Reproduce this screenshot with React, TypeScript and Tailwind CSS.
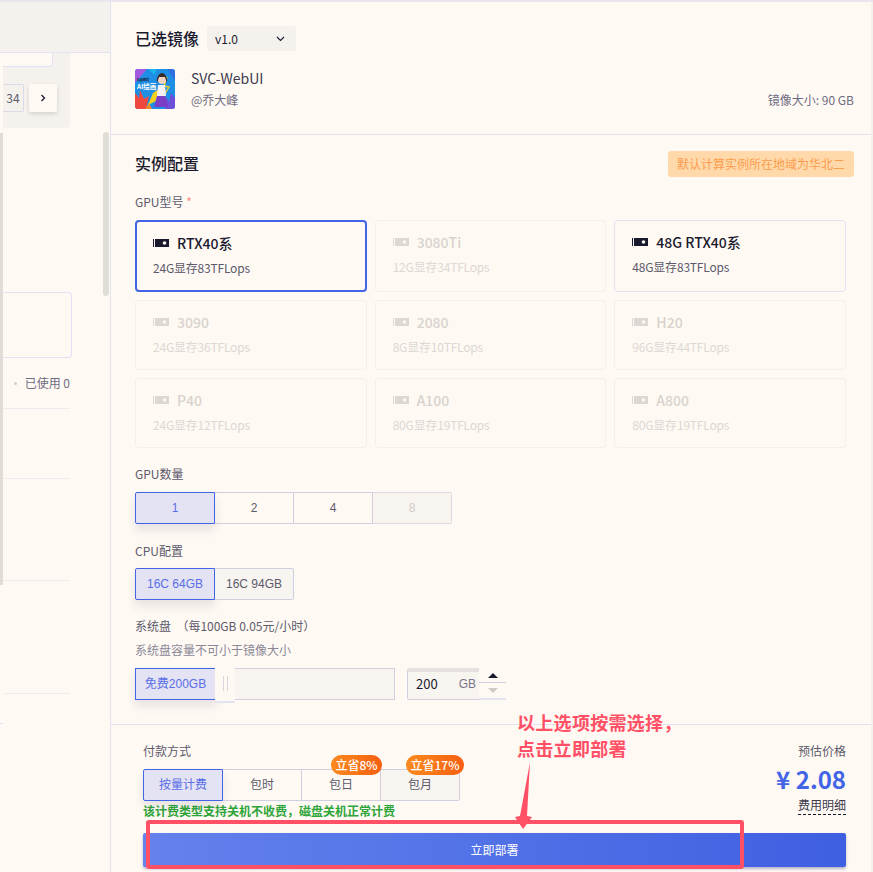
const FONT = "font-['Noto_Sans_CJK_SC','Noto_Sans',sans-serif]";
const ARIAL = "font-['Liberation_Sans','Noto_Sans_CJK_SC',sans-serif]";

function GpuIcon({ off }: { off: boolean }) {
  return (
    <svg width="16" height="8" viewBox="0 0 16 8" className={off ? 'text-[#dcd8d3]' : 'text-[#1a1a2e]'}>
      <rect x="0" y="0" width="1" height="8" fill="currentColor" />
      <rect x="2" y="0" width="14" height="8" fill="currentColor" />
      <circle cx="11.5" cy="4" r="1.8" fill="#fff9f4" />
    </svg>
  );
}

const gpus = [
  { name: 'RTX40系', spec: '24G显存83TFLops', selected: true },
  { name: '3080Ti', spec: '12G显存34TFLops', off: true },
  { name: '48G RTX40系', spec: '48G显存83TFLops' },
  { name: '3090', spec: '24G显存36TFLops', off: true },
  { name: '2080', spec: '8G显存10TFLops', off: true },
  { name: 'H20', spec: '96G显存44TFLops', off: true },
  { name: 'P40', spec: '24G显存12TFLops', off: true },
  { name: 'A100', spec: '80G显存19TFLops', off: true },
  { name: 'A800', spec: '80G显存19TFLops', off: true },
];

function GpuCard({ name, spec, selected, off }: { name: string; spec: string; selected?: boolean; off?: boolean }) {
  return (
    <div
      className={`rounded-[4px] flex flex-col ${
        selected
          ? 'border-2 border-[#4264e6] pt-[11px] pl-[16px]'
          : off
          ? 'border border-[#f3efea] pt-[11px] pl-[17px]'
          : 'border border-[#e3e1f3] pt-[11px] pl-[17px]'
      }`}
    >
      <div className="flex items-center gap-[8px] h-[20px]">
        <GpuIcon off={!!off} />
        <span className={`text-[14px] font-medium ${off ? 'text-[#d8d3cd]' : 'text-[#1a1a2e]'}`}>{name}</span>
      </div>
      <div className={`mt-[6px] text-[12px] leading-[18px] tracking-[-0.2px] ${off ? 'text-[#dcd8d3]' : 'text-[#5c5a6b]'}`}>{spec}</div>
    </div>
  );
}

function Seg({ items, active = 0, disabled = -1 }: { items: string[]; active?: number; disabled?: number }) {
  return (
    <div className={`${ARIAL} flex h-[32px] w-fit`}>
      {items.map((t, i) => (
        <div
          key={t}
          className={`flex items-center justify-center text-[12px] border-y border-r ${
            i === active
              ? 'w-[80px] border-l border-[#4264e6] bg-[#e3e3f3] text-[#5a6ee6] rounded-l-[2px] shadow-[0_6px_10px_rgba(60,60,80,0.12)]'
              : i === disabled
              ? 'w-[79px] border-[#dcdae0] bg-[#f5f2ee] text-[#cfcbc6]'
              : 'w-[79px] border-[#d0cfe0] text-[#5c5a6b]'
          } ${i === items.length - 1 ? 'rounded-r-[2px] bg-[#f8f4f0]' : ''}`}
        >
          {t}
        </div>
      ))}
    </div>
  );
}

function Label({ children }: { children: React.ReactNode }) {
  return <div className="text-[12px] leading-[18px] text-[#5c5a6b]">{children}</div>;
}

function Cover() {
  return (
    <svg width="40" height="40" viewBox="0 0 40 40" className="rounded-[3px]">
      <rect width="40" height="40" fill="#1f8fe6" />
      <path d="M0 0h12L0 14z" fill="#a45ae0" />
      <path d="M14 0h8l-3 6z" fill="#19b4e8" />
      <path d="M32 0h8v12z" fill="#2f6fe0" />
      <path d="M0 40V24l4 5 1-8 4 9 5-3-3 13z" fill="#f0483e" />
      <path d="M10 40l4-6 3 6z" fill="#f58a2e" />
      <path d="M30 40l1-12 3 5 2-9 4 5v11z" fill="#6d4fd8" />
      <path d="M13 36l5-12 6-4-3 12z" fill="#f3d21f" />
      <path d="M32 8l-3 9 5 1-5 8" stroke="#f3d21f" strokeWidth="1.4" fill="none" />
      <path d="M22 27l8-1 3 12H19z" fill="#7a3fc4" />
      <path d="M23 16h7l1 11h-9z" fill="#f3f1f4" />
      <circle cx="27" cy="11" r="4" fill="#f1d3c2" />
      <path d="M22 14c-1-7 3-10 5-10s6 3 5 10l-2-6h-6z" fill="#3b2a2a" />
      <text x="2" y="12" fontSize="3" fontWeight="700" fill="#1a1a2e">绘画教程</text>
      <text x="2" y="20" fontSize="6.5" fontWeight="700" fill="#fff">AI绘画</text>
    </svg>
  );
}

export default function App() {
  return (
    <div className={`${FONT} relative w-[873px] h-[872px] overflow-hidden bg-[#fff9f4] text-[#1a1a2e] flex flex-col`}>
      <div className="h-[2px] bg-[#e9e6ee] shrink-0" />
      <div className="flex flex-1 min-h-0">
        {/* left list, cut off by the drawer */}
        <aside className="w-[111px] shrink-0 border-r border-[#e3e1f3] flex flex-col relative">
          <div className="h-[51px] shrink-0 bg-[#f5f2ee] border-b border-[#e3e1f3]" />
          <div className="ml-[3px] w-[67px] h-[75px] shrink-0 bg-[#f5f2ee] rounded-br-[4px]">
            <div className="w-[50px] h-[14px] bg-[#fff9f4] border-b border-r border-[#e3e1f3] rounded-br-[4px]" />
            <div className="mt-[17px] flex gap-[5px]">
              <div className="w-[21px] h-[28px] border border-[#dcdae6] border-l-0 rounded-r-[2px] text-[12px] text-[#5c5a6b] flex items-center justify-center">34</div>
              <div className="w-[28px] h-[28px] bg-[#fff9f4] rounded-[2px] shadow-[0_2px_4px_rgba(60,60,80,0.18)] flex items-center justify-center">
                <svg width="8" height="8" viewBox="0 0 8 8"><path d="M2.5 1l3 3-3 3" stroke="#1a1a2e" strokeWidth="1.3" fill="none" /></svg>
              </div>
            </div>
          </div>
          <div className="ml-[3px] mt-[164px] w-[69px] h-[66px] shrink-0 border border-l-0 border-[#e3e1f3] rounded-r-[4px]" />
          <div className="ml-[3px] w-[67px] mt-[17px] h-[16px] flex items-center justify-end gap-[8px] text-[12px] text-[#6e6c80] whitespace-nowrap">
            <span className="w-[3px] h-[3px] rounded-full bg-[#cfcbd6]" />
            <span>已使用 0</span>
          </div>
          <div className="ml-[3px] w-[67px] mt-[17px] h-[70px] shrink-0 border-t border-[#efebee]" />
          <div className="ml-[3px] w-[67px] h-[102px] shrink-0 border-t border-[#efebee]" />
          <div className="ml-[3px] w-[67px] h-[113px] shrink-0 border-t border-[#efebee]" />
          <div className="ml-[3px] w-[67px] h-[30px] shrink-0 border-t border-[#efebee]" />
          <div className="w-[3px] border-t border-[#e3e1f3]" />
          {/* scrollbars */}
          <div className="absolute left-0 top-[131px] w-[3px] h-[452px] bg-[#e0dcd6]" />
          <div className="absolute left-[103px] top-[130px] w-[6px] h-[164px] rounded-[3px] bg-[#e0dcd6]" />
        </aside>

        <main className="flex-1 min-w-0 flex flex-col border-r-[2px] border-[#f5f2ee]">
          <section className="h-[133px] shrink-0 border-b border-[#e3e1f3] pl-[24px] pr-[17px] pt-[24px]">
            <div className="flex items-start gap-[8px] h-[25px]">
              <h2 className="text-[16px] font-medium leading-[26px] text-[#1a1a2e] -mt-[1px]">已选镜像</h2>
              <div className="w-[89px] h-[25px] bg-[#f5f2ee] rounded-[3px] pl-[8px] pr-[11px] flex items-center justify-between text-[12px] text-[#1a1a2e]">
                <span>v1.0</span>
                <svg width="9" height="6" viewBox="0 0 9 6"><path d="M1 1l3.5 3.5L8 1" stroke="#1a1a2e" strokeWidth="1.1" fill="none" /></svg>
              </div>
            </div>
            <div className="mt-[18px] flex items-center">
              <Cover />
              <div className="ml-[16px] flex-1">
                <div className="text-[14px] leading-[20px] mt-[-2px] text-[#3c3a4c]">SVC-WebUI</div>
                <div className="mt-[3px] flex items-center justify-between text-[12px] leading-[18px] text-[#6e6c80]">
                  <span>@乔大峰</span>
                  <span>镜像大小: 90 GB</span>
                </div>
              </div>
            </div>
          </section>

          <section className="h-[590px] shrink-0 border-b border-[#e3e1f3] pl-[24px] pr-[25px] pt-[15px]">
            <div className="flex items-center justify-between mr-[-8px]">
              <h2 className="text-[16px] font-medium leading-[26px] mb-[2px]">实例配置</h2>
              <div className="h-[26px] w-[186px] rounded-[3px] bg-[#ffd9aa] text-[12px] text-[#fb9d4e] flex items-center justify-center">
                默认计算实例所在地域为华北二
              </div>
            </div>
            <div className="mt-[15px]"><Label>GPU型号 <span className="text-[#f58a7c]">*</span></Label></div>
            <div className="mt-[9px] grid grid-cols-3 grid-rows-[72px_70px_70px] gap-x-[8px] gap-y-[8px]">
              {gpus.map((g) => <GpuCard key={g.name} {...g} />)}
            </div>
            <div className="mt-[17px]"><Label>GPU数量</Label></div>
            <div className="mt-[9px]"><Seg items={['1', '2', '4', '8']} disabled={3} /></div>
            <div className="mt-[18px]"><Label>CPU配置</Label></div>
            <div className="mt-[8px]"><Seg items={['16C 64GB', '16C 94GB']} /></div>
            <div className="mt-[17px]"><Label>系统盘 &nbsp;（每100GB 0.05元/小时）</Label></div>
            <div className="mt-[6px] text-[12px] leading-[18px] text-[#8a8896]">系统盘容量不可小于镜像大小</div>
            <div className="mt-[9px] flex items-center">
              <div className="relative w-[260px] h-[32px] border border-[#d0cfe0] bg-[#f8f4f0]">
                <div className="absolute -left-px -top-px w-[81px] h-[32px] border border-[#4264e6] bg-[#e3e3f3] text-[12px] text-[#5a6ee6] flex items-center justify-center shadow-[0_6px_10px_rgba(60,60,80,0.12)]">
                  <span className={ARIAL}>免费200GB</span>
                </div>
                <div className="absolute left-[79px] -top-[3px] w-[20px] h-[37px] bg-[#fff9f4] border-b-2 border-[#e3e3f3] flex items-center justify-center gap-[3px]">
                  <span className="w-px h-[15px] bg-[#d8d6de]" />
                  <span className="w-px h-[15px] bg-[#d8d6de]" />
                </div>
              </div>
              <div className="ml-[12px] w-[73px] h-[32px] border border-[#d0cfe0] border-t-[#e4e1de] border-t-[4px] bg-[#f8f4f0] rounded-l-[2px] pl-[8px] pr-[3px] pb-[3px] flex items-center justify-between">
                <span className="text-[13px] text-[#1a1a2e]">200</span>
                <span className={`${ARIAL} text-[12px] text-[#77758a]`}>GB</span>
              </div>
              <div className="w-[27px] h-[32px] -ml-px bg-[#fff9f4] border-b-2 border-[#e3e3f3] flex flex-col">
                <div className="h-[15px] border-b border-[#d0cfe0] flex items-center justify-center">
                  <svg width="10" height="5" viewBox="0 0 10 5"><path d="M5 0l5 5H0z" fill="#1a1a2e" /></svg>
                </div>
                <div className="flex-1 flex items-center justify-center">
                  <svg width="10" height="5" viewBox="0 0 10 5"><path d="M5 5L0 0h10z" fill="#cfcbc6" /></svg>
                </div>
              </div>
            </div>
          </section>

          <section className="flex-1 pl-[32px] pr-[25px] pt-[17px] relative">
            <div className="flex justify-between">
              <div>
                <Label>付款方式</Label>
                <div className="mt-[9px] relative w-fit">
                  <Seg items={['按量计费', '包时', '包日', '包月']} />
                  <div className="absolute left-[188px] -top-[14px] w-[51px] h-[20px] rounded-[10px] bg-gradient-to-r from-[#fb8a1e] to-[#f55f12] text-white text-[12px] font-medium flex items-center justify-center">立省8%</div>
                  <div className="absolute left-[263px] -top-[14px] w-[58px] h-[20px] rounded-[10px] bg-gradient-to-r from-[#fb8a1e] to-[#f55f12] text-white text-[12px] font-medium flex items-center justify-center">立省17%</div>
                </div>
                <div className="mt-[2px] text-[12px] leading-[16px] font-bold text-[#2ea53a]">该计费类型支持关机不收费，磁盘关机正常计费</div>
              </div>
              <div className="text-right">
                <Label>预估价格</Label>
                <div className="mt-[3px] text-[24px] leading-[32px] font-bold text-[#4264e6]">¥ 2.08</div>
                <div className="mt-[1px] w-fit ml-auto text-[12px] leading-[18px] text-[#3c3a4c] border-b border-dashed border-[#1a1a2e]">费用明细</div>
              </div>
            </div>
            <button className="mt-[14px] w-full h-[34px] rounded-[2px] bg-gradient-to-r from-[#6482ec] to-[#3f5fe2] text-white text-[12px] shadow-[0_2px_3px_rgba(40,50,120,0.35)]">立即部署</button>
          </section>
        </main>
      </div>

      {/* red annotation laid over the screenshot */}
      <div className="absolute left-[146px] top-[820px] w-[598px] h-[49px] border-[4px] border-[#ff5066] rounded-[3px]" />
      <div className="absolute left-[517px] top-[709px] text-[18px] leading-[26px] font-bold tracking-[0.3px] text-[#ff5066]">
        <div>以上选项按需选择，</div>
        <div>点击立即部署</div>
      </div>
      <svg className="absolute left-[510px] top-[760px]" width="32" height="72" viewBox="0 0 32 72">
        <path d="M20 2L17 56l5 1-9 12-8-12 5-1z" fill="#ff5066" />
      </svg>
    </div>
  );
}
